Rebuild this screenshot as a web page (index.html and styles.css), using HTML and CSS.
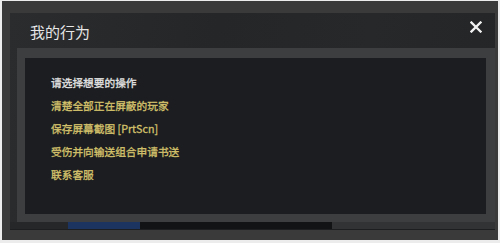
FILE: index.html
```html
<!DOCTYPE html>
<html lang="zh-CN">
<head>
<meta charset="utf-8">
<title>我的行为</title>
<link rel="stylesheet" href="styles.css">
</head>
<body>
<div class="screen">
  <div class="window">
    <div class="inner">
      <div class="header">
        <div class="title">我的行为</div>
        <div class="close" aria-label="关闭">
          <svg width="12" height="12" viewBox="0 0 12 12">
            <path d="M1.5 1.5 L10.5 10.5 M10.5 1.5 L1.5 10.5" stroke="#f2f2f2" stroke-width="2.3" stroke-linecap="square" fill="none"/>
          </svg>
        </div>
      </div>
      <div class="panel">
        <div class="content">
          <div class="prompt">请选择想要的操作</div>
          <div class="item">清楚全部正在屏蔽的玩家</div>
          <div class="item">保存屏幕截图 [PrtScn]</div>
          <div class="item">受伤并向输送组合申请书送</div>
          <div class="item">联系客服</div>
        </div>
      </div>
      <div class="strip">
        <div class="strip-lead"></div>
        <div class="strip-blue"></div>
        <div class="strip-black"></div>
      </div>
    </div>
    <div class="edge"></div>
  </div>
</div>
</body>
</html>
```
FILE: styles.css
```css
html, body {
  margin: 0;
  padding: 0;
}

body {
  width: 500px;
  height: 243px;
  overflow: hidden;
  font-family: "Noto Sans CJK SC", "Noto Sans", sans-serif;
}

.screen {
  width: 500px;
  height: 243px;
  box-sizing: border-box;
  background: #ececec;
  padding: 1px 2px 3px 2px;
}

.window {
  height: 239px;
  box-sizing: border-box;
  background: #3a3a3b;
  padding: 12px 3px 0 8px;
  display: flex;
  flex-direction: column;
}

.inner {
  height: 216px;
  display: flex;
  flex-direction: column;
  background: linear-gradient(100deg, #2b2c2e 0%, #242628 40%, #26282a 70%, #232527 100%);
}

.header {
  height: 35px;
  display: flex;
  justify-content: space-between;
  align-items: flex-start;
  padding: 0 13px 0 20px;
}

.title {
  margin-top: 9px;
  font-size: 15px;
  line-height: 20px;
  color: #e6e6e6;
}

.close {
  margin-top: 8px;
  width: 12px;
  height: 12px;
  display: flex;
}

.panel {
  margin-left: 7px;
  height: 174px;
  box-sizing: border-box;
  background: #3c3e3f;
  padding: 10px 9px 8px 8px;
}

.content {
  height: 100%;
  box-sizing: border-box;
  background: #1b1d20;
  padding: 13px 0 0 26px;
  font-size: 10.7px;
  line-height: 23px;
  color: #d4c26c;
  -webkit-text-stroke: 0.3px currentColor;
}

.prompt {
  color: #e4e4e4;
}

.strip {
  height: 7px;
  display: flex;
  background: #323334;
}

.strip-lead {
  width: 58px;
  background: #262728;
}

.strip-blue {
  width: 72px;
  background: #1b3560;
}

.strip-black {
  width: 192px;
  background: #121314;
}

.edge {
  height: 1px;
  background: #1d1e1f;
}
```
